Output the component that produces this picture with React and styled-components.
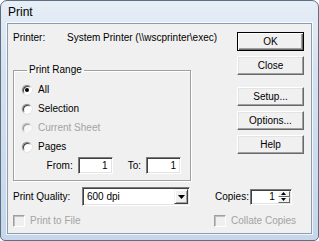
import React from 'react';
import styled, { createGlobalStyle } from 'styled-components';

const FONT = `"Liberation Sans", Arial, sans-serif`;
const FS = '10px';

const Global = createGlobalStyle`
  html, body { margin: 0; padding: 0; background: #ffffff; }
  body { width: 319px; height: 241px; overflow: hidden; }
  * { box-sizing: border-box; }
`;

const Frame = styled.div`
  width: 319px;
  height: 241px;
  border: 1px solid #5f6f82;
  border-radius: 7px 7px 5px 5px;
  background: linear-gradient(180deg, #e6eef7 0%, #d4e1ef 30%, #c6d7eb 100%);
  display: flex;
  flex-direction: column;
  padding: 0 6px 6px 6px;
  font-family: ${FONT};
  font-size: ${FS};
  color: #000;
  white-space: nowrap;
`;

const TitleBar = styled.div`
  height: 22px;
  line-height: 22px;
  padding-left: 1px;
  font-size: 12px;
  color: #000;
`;

const Client = styled.div`
  flex: 1;
  background: #f0f0f0;
  border: 1px solid #8d9db1;
  box-shadow: 0 0 0 1px rgba(255, 255, 255, 0.75);
  padding: 8px 7px 0 5px;
  display: flex;
  flex-direction: column;
`;

const Top = styled.div`
  display: flex;
  justify-content: space-between;
`;

const LeftCol = styled.div`
  width: 178px;
  display: flex;
  flex-direction: column;
`;

const PrinterRow = styled.div`
  display: flex;
  height: 12px;
  line-height: 12px;
`;

const PrinterLabel = styled.span`
  width: 54px;
  flex: none;
`;

const Group = styled.fieldset`
  margin: 20px 0 0 0;
  padding: 4px 9px 4px 8px;
  height: 117px;
  border: 1px solid #a0a0a0;
  box-shadow: inset 1px 1px 0 #ffffff, 1px 1px 0 #ffffff;
  min-width: 0;
`;

const Legend = styled.legend`
  margin-left: 5px;
  padding: 0 2px;
  line-height: 12px;
`;

const RadioRow = styled.label`
  display: flex;
  align-items: center;
  height: 19px;
  gap: 6px;
  color: ${p => (p.$disabled ? '#a3a3a3' : '#000')};
`;

const RadioDot = styled.span`
  width: 10px;
  height: 10px;
  flex: none;
  border-radius: 50%;
  border: 1px solid;
  border-color: #8a8a8a #ffffff #ffffff #8a8a8a;
  background: #ffffff;
  box-shadow: inset 1px 1px 0 #404040, 0 0 0 0.5px #d8d8d8;
  position: relative;
  opacity: ${p => (p.$disabled ? 0.5 : 1)};
  &::after {
    content: '';
    display: ${p => (p.$checked ? 'block' : 'none')};
    position: absolute;
    left: 2px;
    top: 2px;
    width: 4px;
    height: 4px;
    border-radius: 50%;
    background: #000;
  }
`;

const RangeRow = styled.div`
  display: flex;
  justify-content: flex-end;
  align-items: center;
  margin-top: 1px;
`;

const RangeLabel = styled.span`
  margin-right: 5px;
  margin-left: ${p => p.$gap || 0}px;
`;

const Field = styled.div`
  width: ${p => p.$w}px;
  height: ${p => p.$h || 17}px;
  flex: none;
  background: #ffffff;
  border: 1px solid;
  border-color: #7a7a7a #ffffff #ffffff #7a7a7a;
  box-shadow: inset 1px 1px 0 #404040, inset -1px -1px 0 #e3e3e3;
  display: flex;
  align-items: center;
  justify-content: ${p => (p.$left ? 'flex-start' : 'flex-end')};
  padding: 0 ${p => (p.$left ? 0 : 4)}px 0 ${p => (p.$left ? 4 : 0)}px;
  line-height: 12px;
  position: relative;
`;

const ButtonCol = styled.div`
  width: 67px;
  display: flex;
  flex-direction: column;
  gap: 5px;
`;

const Button = styled.button`
  width: 67px;
  height: 19px;
  margin: 0;
  margin-top: ${p => p.$mt || 0}px;
  padding: 0;
  font-family: ${FONT};
  font-size: ${FS};
  color: #000;
  background: #f0f0f0;
  border: 1px solid;
  border-color: ${p => (p.$default ? '#000' : '#ffffff #696969 #696969 #ffffff')};
  box-shadow: ${p =>
    p.$default
      ? 'inset 1px 1px 0 #ffffff, inset -1px -1px 0 #696969, inset -2px -2px 0 #a0a0a0'
      : 'inset -1px -1px 0 #a0a0a0, inset 1px 1px 0 #e3e3e3'};
`;

const Bottom = styled.div`
  display: flex;
  align-items: center;
  margin-top: 6px;
  height: 19px;
`;

const QualityLabel = styled.span`
  width: 69px;
  flex: none;
`;

const DropButton = styled.span`
  position: absolute;
  right: 1px;
  top: 1px;
  bottom: 1px;
  width: 14px;
  background: #f0f0f0;
  border: 1px solid;
  border-color: #f0f0f0 #404040 #404040 #f0f0f0;
  box-shadow: inset 1px 1px 0 #ffffff, inset -1px -1px 0 #a0a0a0;
  display: flex;
  align-items: center;
  justify-content: center;
`;

const CopiesLabel = styled.span`
  margin-left: 25px;
  margin-right: 1px;
  flex: none;
`;

const SpinWrap = styled.span`
  position: absolute;
  right: 1px;
  top: 1px;
  bottom: 1px;
  width: 12px;
  display: flex;
  flex-direction: column;
`;

const SpinBtn = styled.span`
  flex: 1;
  background: #f0f0f0;
  border: 1px solid;
  border-color: #ffffff #696969 #696969 #ffffff;
  display: flex;
  align-items: center;
  justify-content: center;
`;

const SpinValue = styled.span`
  margin-right: 12px;
`;

const ChecksRow = styled.div`
  display: flex;
  align-items: center;
  margin-top: 8px;
  height: 13px;
`;

const CheckItem = styled.label`
  display: flex;
  align-items: center;
  gap: 5px;
  color: #a3a3a3;
  width: ${p => p.$w || 'auto'};
`;

const CheckBox = styled.span`
  width: 12px;
  height: 12px;
  flex: none;
  border: 1px solid;
  border-color: #a0a0a0 #ffffff #ffffff #a0a0a0;
  box-shadow: inset 1px 1px 0 #c0c0c0;
  background: #f0f0f0;
`;

const Tri = ({ w = 7, h = 4, up }) => (
  <svg width={w} height={h} viewBox={`0 0 ${w} ${h}`}>
    <polygon
      points={up ? `0,${h} ${w},${h} ${w / 2},0` : `0,0 ${w},0 ${w / 2},${h}`}
      fill="#000"
    />
  </svg>
);

export default function App() {
  return (
    <>
      <Global />
      <Frame>
        <TitleBar>Print</TitleBar>
        <Client>
          <Top>
            <LeftCol>
              <PrinterRow>
                <PrinterLabel>Printer:</PrinterLabel>
                <span>System Printer (\\wscprinter\exec)</span>
              </PrinterRow>
              <Group>
                <Legend>Print Range</Legend>
                <RadioRow>
                  <RadioDot $checked />
                  All
                </RadioRow>
                <RadioRow>
                  <RadioDot />
                  Selection
                </RadioRow>
                <RadioRow $disabled>
                  <RadioDot $disabled />
                  Current Sheet
                </RadioRow>
                <RadioRow>
                  <RadioDot />
                  Pages
                </RadioRow>
                <RangeRow>
                  <RangeLabel>From:</RangeLabel>
                  <Field $w={35}>1</Field>
                  <RangeLabel $gap={15}>To:</RangeLabel>
                  <Field $w={35}>1</Field>
                </RangeRow>
              </Group>
            </LeftCol>
            <ButtonCol>
              <Button $default>OK</Button>
              <Button>Close</Button>
              <Button $mt={7}>Setup...</Button>
              <Button>Options...</Button>
              <Button>Help</Button>
            </ButtonCol>
          </Top>
          <Bottom>
            <QualityLabel>Print Quality:</QualityLabel>
            <Field $w={108} $h={19} $left>
              600 dpi
              <DropButton>
                <Tri />
              </DropButton>
            </Field>
            <CopiesLabel>Copies:</CopiesLabel>
            <Field $w={42} $h={16}>
              <SpinValue>1</SpinValue>
              <SpinWrap>
                <SpinBtn>
                  <Tri w={5} h={3} up />
                </SpinBtn>
                <SpinBtn>
                  <Tri w={5} h={3} />
                </SpinBtn>
              </SpinWrap>
            </Field>
          </Bottom>
          <ChecksRow>
            <CheckItem $w="201px">
              <CheckBox />
              Print to File
            </CheckItem>
            <CheckItem>
              <CheckBox />
              Collate Copies
            </CheckItem>
          </ChecksRow>
        </Client>
      </Frame>
    </>
  );
}
